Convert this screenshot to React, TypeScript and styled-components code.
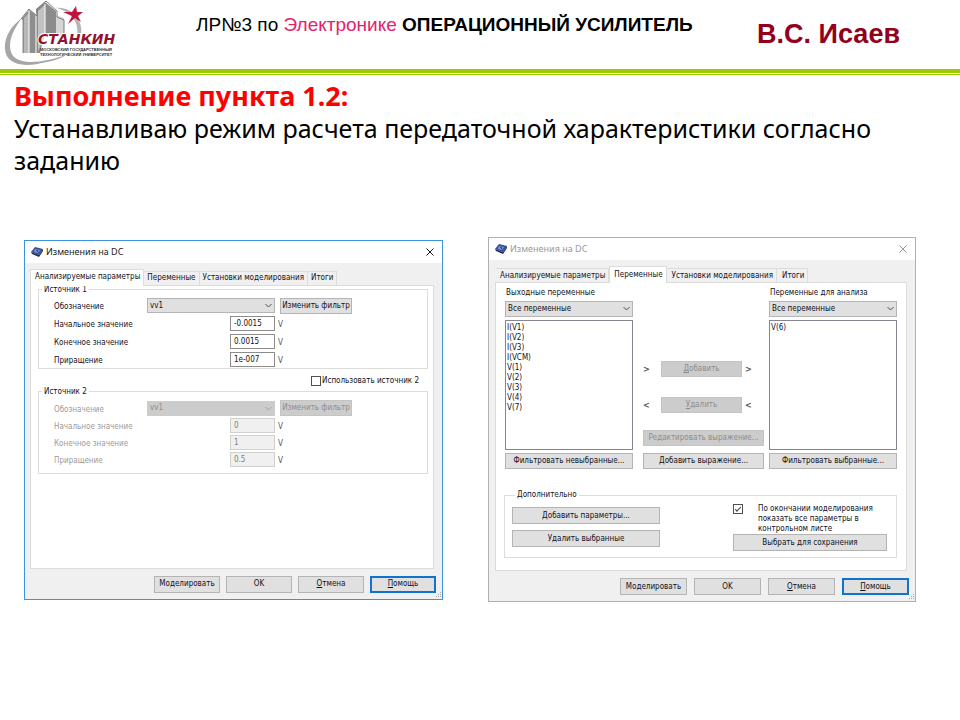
import React, { useId } from "react";
import styled, { createGlobalStyle, css } from "styled-components";

const Global = createGlobalStyle`
  *, *::before, *::after { box-sizing: border-box; }
  body { margin: 0; background: #fff; color: #000; font-family: "Noto Sans", "Open Sans", sans-serif; }
`;

/* ---------- slide ---------- */

const Header = styled.header`
  display: flex;
  align-items: flex-start;
  height: 69px;
  padding: 0 60px 0 4px;
`;

const LogoSvg = styled.svg`
  flex: none;
  width: 114px;
  height: 67px;
`;

const Topic = styled.h1`
  margin: 14px 0 0 78px;
  font: 400 19px/22px "Liberation Sans", Arial, sans-serif;
`;

const Subject = styled.span`
  color: #e0246c;
`;

const Author = styled.div`
  margin: 19px 0 0 auto;
  font: 700 27px/30px "Liberation Sans", Arial, sans-serif;
  color: #92001c;
  white-space: nowrap;
`;

const Rule = styled.div`
  height: 6px;
  border-top: 4px solid #99cc00;
  border-bottom: 1px solid #99cc00;
`;

const Statement = styled.section`
  padding: 5px 14px 0;
  font-size: 25px;
  line-height: 32px;
`;

const Point = styled.h2`
  margin: 0;
  font-size: 27px;
  line-height: 32px;
  color: #ff0000;
`;

const Task = styled.p`
  margin: 0;
`;

const Windows = styled.div`
  display: flex;
  align-items: center;
  gap: 45px;
  padding: 61px 44px 24px 24px;
`;

/* ---------- dialog ---------- */

const Frame = styled.section<{ $active?: boolean; $grow: number }>`
  flex: ${(p) => p.$grow} 1 0;
  min-width: 0;
  position: relative;
  background: #f0f0f0;
  border: 1px solid ${(p) => (p.$active ? "#3c92dc" : "#b0b0b0")};
  font: 400 8px/10px "DejaVu Sans Condensed", "DejaVu Sans", sans-serif;
  color: #10101a;
`;

const TitleBar = styled.div<{ $active?: boolean }>`
  display: flex;
  align-items: center;
  gap: 3px;
  height: 22px;
  padding: 0 8px 0 6px;
  background: #fff;
  font: 400 9px/12px "Noto Sans", "Open Sans", sans-serif;
  color: ${(p) => (p.$active ? "#1a1a1a" : "#999")};
`;

const CloseButton = styled.button`
  margin-left: auto;
  padding: 0;
  border: 0;
  background: none;
  color: inherit;
  line-height: 0;
`;

const Body = styled.div<{ $left: number }>`
  padding: 6px 8px 0 ${(p) => p.$left}px;
`;

const Tabs = styled.div`
  display: flex;
  align-items: flex-end;
`;

const Tab = styled.button<{ $on: boolean; $pad: number }>`
  height: 14px;
  padding: 0 3px 0 ${(p) => p.$pad}px;
  border: 1px solid #dcdcdc;
  border-left-color: #f0f0f0;
  border-bottom: 0;
  background: #f0f0f0;
  font: inherit;
  color: inherit;
  white-space: nowrap;
  ${(p) =>
    p.$on &&
    css`
      height: 17px;
      margin-bottom: -1px;
      padding: 0 3px 1px 4px;
      background: #fff;
      border-left-color: #dcdcdc;
      position: relative;
    `}
`;

const Panel = styled.div<{ $min: number }>`
  min-height: ${(p) => p.$min}px;
  border: 1px solid #dcdcdc;
  background: #fff;
`;

const Button = styled.button<{ $primary?: boolean; $width?: number }>`
  height: 16px;
  padding: 0;
  ${(p) => p.$width && `width: ${p.$width}px;`}
  border: 1px solid #b4b4b4;
  background: #e0e0e0;
  font: inherit;
  color: inherit;
  white-space: nowrap;
  &:disabled {
    background: #cccccc;
    border-color: #c4c4c4;
    color: #8c8c8c;
  }
  ${(p) =>
    p.$primary &&
    css`
      border: 2px solid #1273cf;
    `}
`;

const Footer = styled.footer<{ $wide: boolean }>`
  display: flex;
  justify-content: flex-end;
  gap: ${(p) => (p.$wide ? 7 : 6)}px;
  padding: 7px 6px 6px;
  ${Button} {
    width: ${(p) => (p.$wide ? 67 : 66)}px;
    height: 17px;
  }
`;

const SizeGrip = styled.svg`
  position: absolute;
  right: 0;
  bottom: 0;
  width: 7px;
  height: 7px;
`;

/* ---------- controls ---------- */

const Group = styled.fieldset<{ $pad: string }>`
  min-width: 0;
  margin: 0;
  padding: ${(p) => p.$pad};
  border: 1px solid #dcdcdc;
`;

const Legend = styled.legend`
  height: 8px;
  margin-left: 3px;
  padding: 0 2px;
  line-height: 8px;
`;

const Fields = styled.div<{ $row: number; $off?: boolean }>`
  display: grid;
  grid-template-columns: 93px 83px 45px 1fr;
  grid-auto-rows: ${(p) => p.$row}px;
  row-gap: 2px;
  align-items: center;
  padding-left: 15px;
  color: ${(p) => (p.$off ? "#9a9a9a" : "inherit")};
`;

const FieldLabel = styled.label`
  grid-column: 1;
  padding-top: 3px;
`;

const Picker = styled.span<{ $wide?: boolean }>`
  position: relative;
  display: block;
  height: 16px;
  ${(p) => p.$wide && "grid-column: 2 / span 2; height: 15px;"}
`;

const Select = styled.select`
  display: block;
  width: 100%;
  height: 100%;
  padding: 0 14px 0 2px;
  border: 1px solid #b4b4b4;
  border-radius: 0;
  appearance: none;
  background: #e0e0e0;
  font: inherit;
  color: inherit;
  &:disabled {
    background: #cccccc;
    border-color: #cccccc;
    color: #8c8c8c;
    opacity: 1;
  }
`;

const Arrow = styled.svg`
  position: absolute;
  right: 3px;
  top: 5px;
  width: 7px;
  height: 5px;
  pointer-events: none;
`;

const FilterCell = styled.div`
  grid-column: 4;
  padding-left: 5px;
`;

const Value = styled.input`
  grid-column: 3;
  width: 100%;
  height: 15px;
  padding: 0 3px;
  border: 1px solid #8c8c8c;
  background: #fff;
  font: inherit;
  color: inherit;
  &:disabled {
    background: #f0f0f0;
    border-color: #d0d0d0;
    color: #808080;
  }
`;

const Unit = styled.span`
  grid-column: 4;
  padding: 3px 0 0 3px;
  color: #505058;
`;

const CheckLine = styled.div`
  display: flex;
  justify-content: flex-end;
  align-items: center;
  gap: 1px;
  padding: 7px 9px 2px;
`;

const Tick = styled.input`
  flex: none;
  display: grid;
  place-items: center;
  appearance: none;
  width: 10px;
  height: 10px;
  margin: 0;
  border: 1px solid #505050;
  background: #fff;
  &:checked::after {
    content: "";
    width: 6px;
    height: 3px;
    border: solid #404040;
    border-width: 0 0 1px 1px;
    transform: translateY(-1px) rotate(-45deg);
  }
`;

const SourceGroups = styled.div`
  padding: 0 5px 0 7px;
`;

/* ---------- variables tab ---------- */

const Chooser = styled.div`
  display: grid;
  grid-template-columns: 128fr 136fr 128fr;
  padding: 5px 9px 0;
`;

const Column = styled.div`
  display: flex;
  flex-direction: column;
  gap: 3px;
`;

const ColumnLabel = styled.label`
  padding-left: 1px;
`;

const ListBox = styled.select`
  width: 100%;
  height: 130px;
  padding: 1px 0;
  border: 1px solid #858590;
  border-radius: 0;
  background: #fff;
  overflow: hidden;
  font: inherit;
  color: inherit;
  option {
    min-height: 10px;
    padding: 1px 1px 0;
  }
`;

const Transfer = styled.div`
  display: flex;
  flex-direction: column;
  justify-content: flex-end;
  padding: 0 5px 0 10px;
`;

const MoveRow = styled.div`
  display: grid;
  grid-template-columns: 18px 1fr 22px;
  align-items: center;
  margin-bottom: 20px;
  & + & {
    margin-bottom: 17px;
  }
`;

const Angle = styled.span<{ $right?: boolean }>`
  font-size: 9px;
  font-weight: 700;
  color: #505050;
  padding-left: ${(p) => (p.$right ? 3 : 0)}px;
`;

const Stack = styled.div<{ $gap: number; $top?: number }>`
  display: flex;
  flex-direction: column;
  gap: ${(p) => p.$gap}px;
  padding-top: ${(p) => p.$top ?? 0}px;
`;

const ExtraArea = styled.div`
  padding: 22px 9px 12px 8px;
`;

const ExtraGrid = styled.div`
  display: grid;
  grid-template-columns: 148fr 73fr 154fr;
  ${Button} {
    height: 17px;
  }
`;

const SaveColumn = styled.div`
  grid-column: 3;
  display: flex;
  flex-direction: column;
`;

const SaveOption = styled.label`
  display: grid;
  grid-template-columns: 25px 1fr;
  align-items: start;
`;

/* ---------- drawings ---------- */

const Logo = () => (
  <LogoSvg viewBox="4 0 114 67" role="img" aria-label="СТАНКИН">
    <path d="M22 18C9 27 2 42 6 54c4 11 20 13 36 9 10-2 18-4 24-8-12 4-24 7-35 7-13 0-21-5-21-16 0-9 5-19 12-28Z" fill="#a6a6a6" />
    <path d="M56 8c10-1 19 4 23 13 3 6 3 12 0 19l-3 0c2-7 2-13-1-19-4-7-10-11-19-13Z" fill="#b4b4b4" />
    <path d="M53 14l11 4v18h-11Z" fill="#d6d6d6" />
    <path d="M22 18l7-8 9 6v37H22Z" fill="#8e8e8e" />
    <path d="M24 18l5-5v40h-5Z" fill="#b8b8b8" />
    <path d="M36 9l9-7 11 9v25H44l-4 17h-4Z" fill="#8c8c8c" />
    <path d="M38 11l7-6v30l-5 12-2 4Z" fill="#c2c2c2" />
    <path d="M29 11v42M36 13v40M45 4v31M22 20v33" stroke="#fff" strokeWidth="1" fill="none" />
    <path d="M21 19l8-10 8 7V9l9-8 11 10v6l7 3v15" stroke="#7c7c7c" strokeWidth="1" fill="none" />
    <path d="M76 6l1 6 6 0-5 4 3 6-6-4-7 6 4-8-9-4 9 0Z" fill="#c0143c" />
    <text x="38" y="44" fill="#8f1430" stroke="#fff" strokeWidth="2" paintOrder="stroke" fontFamily="DejaVu Sans" fontWeight="700" fontStyle="italic" fontSize="14">СТАНКИН</text>
    <g fill="#303030" fontFamily="Liberation Sans" fontWeight="700">
      <text x="40" y="51" fontSize="4">МОСКОВСКИЙ ГОСУДАРСТВЕННЫЙ</text>
      <text x="40" y="56" fontSize="4">ТЕХНОЛОГИЧЕСКИЙ УНИВЕРСИТЕТ</text>
    </g>
  </LogoSvg>
);

const AppIcon = () => (
  <svg width="12" height="10" viewBox="0 0 12 10" aria-hidden="true">
    <path d="M4 0l8 2-4 6-8-3Z" fill="#34509c" />
    <path d="M0 5l8 3v2L1 7ZM8 8l4-6v2L8 10Z" fill="#1c2a58" />
    <path d="M4 2l5 1-2 3-4-1Z" fill="#7f9ad4" />
    <path d="M5 3l2 1-1 1" stroke="#24386e" fill="none" />
  </svg>
);

const CloseIcon = () => (
  <svg width="8" height="8" viewBox="0 0 8 8" aria-hidden="true">
    <path d="M.5.5l7 7M7.5.5l-7 7" stroke="currentColor" fill="none" />
  </svg>
);

const Chevron = ({ off }: { off?: boolean }) => (
  <Arrow viewBox="0 0 7 5" aria-hidden="true">
    <path d="M.5 1l3 3 3-3" fill="none" stroke={off ? "#a0a0a0" : "#505050"} />
  </Arrow>
);

const Grip = () => (
  <SizeGrip viewBox="0 0 7 7" aria-hidden="true">
    <path d="M5 0h1v1H5zM3 2h1v1H3zM5 2h1v1H5zM1 4h1v1H1zM3 4h1v1H3zM5 4h1v1H5z" fill="#a8a8a8" />
  </SizeGrip>
);

/* ---------- parts ---------- */

const TABS = ["Анализируемые параметры", "Переменные", "Установки моделирования", "Итоги"];

type DialogProps = { active?: boolean; grow: number; tab: number; panelMin: number; children: React.ReactNode };

const Dialog = ({ active, grow, tab, panelMin, children }: DialogProps) => (
  <Frame $active={active} $grow={grow} role="dialog" aria-label="Изменения на DC">
    <TitleBar $active={active}>
      <AppIcon />
      Изменения на DC
      <CloseButton aria-label="Закрыть">
        <CloseIcon />
      </CloseButton>
    </TitleBar>
    <Body $left={active ? 5 : 6}>
      <Tabs role="tablist">
        {TABS.map((name, i) => (
          <Tab key={name} role="tab" aria-selected={i === tab} $on={i === tab} $pad={active ? 2 : 4}>
            {name}
          </Tab>
        ))}
      </Tabs>
      <Panel $min={panelMin} role="tabpanel">
        {children}
      </Panel>
    </Body>
    <Footer $wide={!active}>
      <Button>Моделировать</Button>
      <Button>OK</Button>
      <Button>
        <u>О</u>тмена
      </Button>
      <Button $primary>
        <u>П</u>омощь
      </Button>
    </Footer>
    <Grip />
  </Frame>
);

type SourceProps = { title: string; values: string[]; row: number; pad: string; off?: boolean };

const Source = ({ title, values, row, pad, off }: SourceProps) => {
  const id = useId();
  const names = ["Начальное значение", "Конечное значение", "Приращение"];
  return (
    <Group $pad={pad}>
      <Legend>{title}</Legend>
      <Fields $row={row} $off={off}>
        <FieldLabel htmlFor={id}>Обозначение</FieldLabel>
        <Picker $wide>
          <Select id={id} disabled={off}>
            <option>vv1</option>
          </Select>
          <Chevron off={off} />
        </Picker>
        <FilterCell>
          <Button $width={72} disabled={off}>
            Изменить фильтр
          </Button>
        </FilterCell>
        {names.map((name, i) => (
          <React.Fragment key={name}>
            <FieldLabel htmlFor={id + i}>{name}</FieldLabel>
            <Value id={id + i} defaultValue={values[i]} disabled={off} />
            <Unit>V</Unit>
          </React.Fragment>
        ))}
      </Fields>
    </Group>
  );
};

const VariableColumn = ({ label, items, filter }: { label: string; items: string[]; filter: string }) => {
  const id = useId();
  return (
    <Column>
      <ColumnLabel htmlFor={id}>{label}</ColumnLabel>
      <Picker>
        <Select id={id}>
          <option>Все переменные</option>
        </Select>
        <Chevron />
      </Picker>
      <ListBox multiple aria-label={label}>
        {items.map((v) => (
          <option key={v}>{v}</option>
        ))}
      </ListBox>
      <Button>{filter}</Button>
    </Column>
  );
};

const OUTPUTS = ["I(V1)", "I(V2)", "I(V3)", "I(VCM)", "V(1)", "V(2)", "V(3)", "V(4)", "V(7)"];

export default function App() {
  return (
    <>
      <Global />
      <Header>
        <Logo />
        <Topic>
          ЛР№3 по <Subject>Электронике</Subject> <b>ОПЕРАЦИОННЫЙ УСИЛИТЕЛЬ</b>
        </Topic>
        <Author>В.С. Исаев</Author>
      </Header>
      <Rule />
      <Statement>
        <Point>Выполнение пункта 1.2:</Point>
        <Task>Устанавливаю режим расчета передаточной характеристики согласно заданию</Task>
      </Statement>
      <Windows>
        <Dialog active grow={419} tab={0} panelMin={284}>
          <SourceGroups>
            <Source title="Источник 1" values={["-0.0015", "0.0015", "1e-007"]} row={16} pad="4px 0 0" />
            <CheckLine>
              <Tick type="checkbox" id="use-second" />
              <label htmlFor="use-second">Использовать источник 2</label>
            </CheckLine>
            <Source title="Источник 2" values={["0", "1", "0.5"]} row={15} pad="5px 0 6px" off />
          </SourceGroups>
        </Dialog>
        <Dialog grow={428} tab={1} panelMin={289}>
          <Chooser>
            <VariableColumn label="Выходные переменные" items={OUTPUTS} filter="Фильтровать невыбранные..." />
            <Transfer>
              <MoveRow>
                <Angle>&gt;</Angle>
                <Button disabled>
                  <u>Д</u>обавить
                </Button>
                <Angle $right>&gt;</Angle>
              </MoveRow>
              <MoveRow>
                <Angle>&lt;</Angle>
                <Button disabled>
                  <u>У</u>далить
                </Button>
                <Angle $right>&lt;</Angle>
              </MoveRow>
              <Stack $gap={7}>
                <Button disabled>Редактировать выражение...</Button>
                <Button>Добавить выражение...</Button>
              </Stack>
            </Transfer>
            <VariableColumn label="Переменные для анализа" items={["V(6)"]} filter="Фильтровать выбранные..." />
          </Chooser>
          <ExtraArea>
            <Group $pad="5px 9px 6px 7px">
              <Legend>Дополнительно</Legend>
              <ExtraGrid>
                <Stack $gap={6} $top={3}>
                  <Button>Добавить параметры...</Button>
                  <Button>Удалить выбранные</Button>
                </Stack>
                <SaveColumn>
                  <SaveOption>
                    <Tick type="checkbox" defaultChecked />
                    <span>По окончании моделирования показать все параметры в контрольном листе</span>
                  </SaveOption>
                  <Button>Выбрать для сохранения</Button>
                </SaveColumn>
              </ExtraGrid>
            </Group>
          </ExtraArea>
        </Dialog>
      </Windows>
    </>
  );
}
